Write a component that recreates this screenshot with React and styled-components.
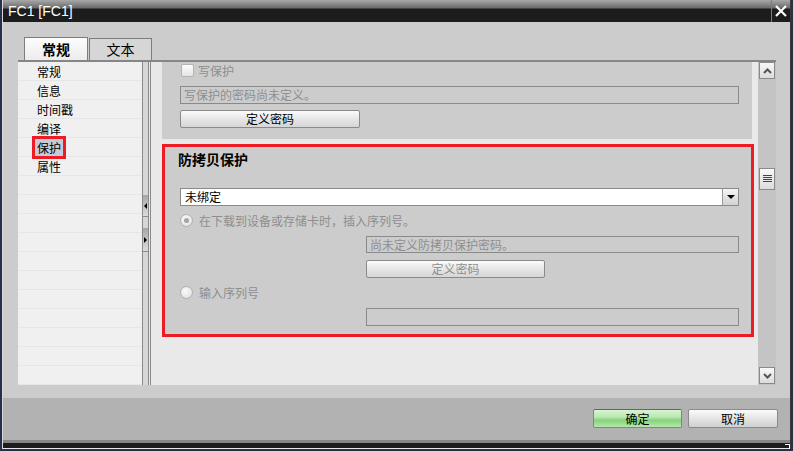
import React from 'react';
import styled, { createGlobalStyle } from 'styled-components';

const cjk = `"Noto Sans CJK SC", "Liberation Sans", sans-serif`;

const GlobalStyle = createGlobalStyle`
  html, body {
    margin: 0;
    padding: 0;
    background: #25314b;
  }
  * {
    box-sizing: border-box;
  }
`;

const Window = styled.div`
  width: 793px;
  height: 451px;
  background: #25314b;
  padding: 0 2px 2px 2px;
`;
const Shell = styled.div`
  height: 449px;
  display: flex;
  flex-direction: column;
  border-left: 1px solid #d8d8d8;
  border-right: 1px solid #3a3a3a;
`;
const TitleBar = styled.div`
  height: 22px;
  flex-shrink: 0;
  display: flex;
  justify-content: space-between;
  background: linear-gradient(to bottom, #a8a8a8 0px, #6a6a6a 8px, #1c1c1c 9px, #1c1c1c 100%);
`;
const Title = styled.div`
  padding-left: 5px;
  color: #fff;
  font: 14px/22px "Liberation Sans", sans-serif;
`;
const CloseButton = styled.div`
  width: 19px;
  height: 22px;
  border-left: 1px solid #7c7c7c;
  display: flex;
  align-items: center;
  justify-content: center;
`;
const Body = styled.div`
  height: 418px;
  flex-shrink: 0;
  display: flex;
  flex-direction: column;
  padding-top: 15px;
  background: #cccccc;
`;
const TabRow = styled.div`
  height: 23px;
  display: flex;
  gap: 1px;
  margin-left: 21px;
`;
const Tab = styled.div`
  width: ${(p) => (p.$active ? 64 : 63)}px;
  height: ${(p) => (p.$active ? 23 : 22)}px;
  margin-top: ${(p) => (p.$active ? 0 : 1)}px;
  border: 1px solid #7d7d7d;
  border-bottom: none;
  background: ${(p) => (p.$active ? 'linear-gradient(#fdfdfd, #ececec)' : '#d6d6d6')};
  font-family: ${cjk};
  font-size: 14px;
  font-weight: ${(p) => (p.$active ? 700 : 400)};
  line-height: ${(p) => (p.$active ? 22 : 21)}px;
  text-align: center;
  color: #000;
`;
const Frame = styled.div`
  height: 325px;
  flex-shrink: 0;
  display: flex;
  margin: 0 14px 0 15px;
  border-top: 2px solid #868686;
  background: #e9e9e9;
`;
const NavList = styled.div`
  width: 124px;
  flex-shrink: 0;
  display: flex;
  flex-direction: column;
  overflow: hidden;
  background: #f0f0f0;
`;
const NavItem = styled.div`
  height: 19px;
  flex-shrink: 0;
  display: flex;
  align-items: center;
  padding-left: 19px;
  border-bottom: 1px solid #e6e6e6;
  font: 12px/17px ${cjk};
  color: #000;
`;
const Highlight = styled.span`
  margin-left: -2px;
  padding: 0 2px;
  background: #c5ccd5;
  outline: 3px solid #ed1c24;
`;
const Splitter = styled.div`
  width: 7px;
  flex-shrink: 0;
  margin-right: 1px;
  padding-top: 133px;
  display: flex;
  flex-direction: column;
  border-left: 1px solid #8a8a8a;
  border-right: 1px solid #8a8a8a;
  background: #d6d6d6;
`;
const SplitButton = styled.div`
  height: ${(p) => p.$h}px;
  margin-top: ${(p) => p.$top || 0}px;
  display: flex;
  align-items: center;
  justify-content: center;
  border-bottom: 1px solid #8a8a8a;
  background: linear-gradient(#a6a6a6, #dcdcdc);
`;
const Arrow = styled.span`
  width: 0;
  height: 0;
  border-top: 3px solid transparent;
  border-bottom: 3px solid transparent;
  ${(p) => (p.$dir === 'left' ? 'border-right: 3px solid #000;' : 'border-left: 3px solid #000;')}
`;
const Pane = styled.div`
  flex: 1;
  display: flex;
  flex-direction: column;
  padding: 0 4px 0 11px;
  border-left: 1px solid #8a8a8a;
  background: #e9e9e9;
`;
const Section = styled.div`
  height: 77px;
  flex-shrink: 0;
  margin-right: 2px;
  padding: 1px 13px 0 18px;
  display: flex;
  flex-direction: column;
  background: #cccccc;
`;
const OutlinedSection = styled.div`
  height: 193px;
  flex-shrink: 0;
  margin-top: 5px;
  padding: 0 12px 0 15px;
  display: flex;
  flex-direction: column;
  border: 3px solid #ed1c24;
  background: #cccccc;
`;
const GroupTitle = styled.div`
  margin: 3px 0 0 -2px;
  font: 700 14px/18px ${cjk};
  color: #000;
`;
const CheckRow = styled.div`
  height: 15px;
  display: flex;
  align-items: center;
  gap: 4px;
  margin-left: 1px;
`;
const CheckBox = styled.span`
  width: 13px;
  height: 13px;
  border: 1px solid #b4b4b4;
  border-radius: 2px;
  background: linear-gradient(#fdfdfd, #e4e4e4);
`;
const RadioRow = styled.div`
  height: 14px;
  margin-top: 7px;
  display: flex;
  align-items: center;
  gap: 6px;
`;
const Radio = styled.span`
  width: 13px;
  height: 13px;
  border-radius: 50%;
  border: 1px solid #b0b0b0;
  background: radial-gradient(circle at 40% 35%, #fafafa, #dcdcdc);
  display: flex;
  align-items: center;
  justify-content: center;
  &::after {
    content: '';
    display: ${(p) => (p.$checked ? 'block' : 'none')};
    width: 5px;
    height: 5px;
    border-radius: 50%;
    background: #a4a4a4;
  }
`;
const Muted = styled.span`
  font: 12px/15px ${cjk};
  color: #8e8e8e;
`;
const Field = styled.div`
  height: ${(p) => p.$h || 18}px;
  margin-top: ${(p) => p.$top}px;
  margin-left: ${(p) => p.$indent || 0}px;
  padding-left: 3px;
  border: 1px solid #8a8a8a;
  background: #cccccc;
  font: 12px/${(p) => (p.$h || 18) - 2}px ${cjk};
  color: #8e8e8e;
  white-space: nowrap;
`;
const Button = styled.div`
  width: ${(p) => p.$w}px;
  height: 18px;
  margin-top: ${(p) => p.$top}px;
  margin-left: ${(p) => p.$indent || 0}px;
  border: 1px solid #8a8a8a;
  border-radius: 2px;
  background: linear-gradient(#fbfbfb, #e6e6e6 50%, #d6d6d6);
  font: 12px/16px ${cjk};
  text-align: center;
  color: ${(p) => (p.$disabled ? '#8e8e8e' : '#000')};
`;
const Select = styled.div`
  height: 18px;
  margin-top: 20px;
  display: flex;
  border: 1px solid #8a8a8a;
  background: #fff;
`;
const SelectValue = styled.div`
  flex: 1;
  padding-left: 4px;
  font: 12px/16px ${cjk};
  color: #000;
`;
const SelectButton = styled.div`
  width: 16px;
  display: flex;
  align-items: center;
  justify-content: center;
  border-left: 1px solid #9a9a9a;
  background: linear-gradient(#f6f6f6, #d2d2d2);
`;
const ScrollBar = styled.div`
  width: 18px;
  flex-shrink: 0;
  display: flex;
  flex-direction: column;
  padding: 0 1px;
  background: #c4c4c4;
`;
const ScrollButton = styled.div`
  height: ${(p) => p.$h || 17}px;
  margin-top: ${(p) => (p.$pushDown ? 'auto' : `${p.$top || 0}px`)};
  margin-bottom: ${(p) => (p.$pushDown ? 1 : 0)}px;
  display: flex;
  align-items: center;
  justify-content: center;
  border: 1px solid #8a8a8a;
  background: linear-gradient(#f8f8f8, #dcdcdc);
`;
const Gap = styled.div`
  height: 13px;
  flex-shrink: 0;
`;
const Footer = styled.div`
  height: 42px;
  flex-shrink: 0;
  display: flex;
  justify-content: flex-end;
  align-items: flex-start;
  gap: 6px;
  padding: 11px 12px 0 0;
  background: #b2b2b2;
`;
const FooterButton = styled.div`
  width: ${(p) => p.$w}px;
  height: 19px;
  border: 1px solid ${(p) => (p.$primary ? '#5f9f58' : '#8a8a8a')};
  border-top-color: ${(p) => (p.$primary ? '#2f8a2f' : '#8a8a8a')};
  border-radius: 2px;
  background: ${(p) =>
    p.$primary
      ? 'linear-gradient(#d8f4d1, #bce9b3 40%, #86d27b 60%, #b6e8ad)'
      : 'linear-gradient(#fbfbfb, #e4e4e4 50%, #d0d0d0)'};
  font: 12px/17px ${cjk};
  text-align: center;
  color: #000;
`;
const BottomEdge = styled.div`
  position: relative;
  height: 9px;
  flex-shrink: 0;
  border-top: 3px solid #868686;
  border-bottom: 1px solid #e8e8e8;
  background: #1c1c1c;
`;
const Grip = styled.span`
  position: absolute;
  right: 0;
  top: 1px;
  width: 5px;
  height: 5px;
  border-top: 1px solid #fff;
  border-right: 1px solid #fff;
`;

const navItems = ['常规', '信息', '时间戳', '编译', '保护', '属性'];

const Chevron = ({ up }) => (
  <svg width="9" height="6" viewBox="0 0 9 6">
    <polyline
      points={up ? '1,5 4.5,1.5 8,5' : '1,1 4.5,4.5 8,1'}
      fill="none"
      stroke="#555"
      strokeWidth="2"
    />
  </svg>
);

const Grabber = () => (
  <svg width="9" height="8" viewBox="0 0 9 8">
    {[0.5, 2.5, 4.5, 6.5].map((y) => (
      <line key={y} x1="0" y1={y} x2="9" y2={y} stroke="#444" strokeWidth="1" />
    ))}
  </svg>
);

export default function App() {
  const rows = Array.from({ length: 17 }, (_, i) => navItems[i] || '');
  return (
    <>
      <GlobalStyle />
      <Window>
        <Shell>
          <TitleBar>
            <Title>FC1 [FC1]</Title>
            <CloseButton>
              <svg width="12" height="12" viewBox="0 0 12 12">
                <line x1="1" y1="1" x2="11" y2="11" stroke="#fff" strokeWidth="2.2" />
                <line x1="11" y1="1" x2="1" y2="11" stroke="#fff" strokeWidth="2.2" />
              </svg>
            </CloseButton>
          </TitleBar>
          <Body>
            <TabRow>
              <Tab $active>常规</Tab>
              <Tab>文本</Tab>
            </TabRow>
            <Frame>
              <NavList>
                {rows.map((label, i) => (
                  <NavItem key={i}>
                    {label === '保护' ? <Highlight>{label}</Highlight> : label}
                  </NavItem>
                ))}
              </NavList>
              <Splitter>
                <SplitButton $h={22}>
                  <Arrow $dir="left" />
                </SplitButton>
                <SplitButton $h={24} $top={11}>
                  <Arrow $dir="right" />
                </SplitButton>
              </Splitter>
              <Pane>
                <Section>
                  <CheckRow>
                    <CheckBox />
                    <Muted>写保护</Muted>
                  </CheckRow>
                  <Field $top={8}>写保护的密码尚未定义。</Field>
                  <Button $w={180} $top={6}>定义密码</Button>
                </Section>
                <OutlinedSection>
                  <GroupTitle>防拷贝保护</GroupTitle>
                  <Select>
                    <SelectValue>未绑定</SelectValue>
                    <SelectButton>
                      <svg width="8" height="6" viewBox="0 0 8 6">
                        <polygon points="0,1 8,1 4,5" fill="#000" />
                      </svg>
                    </SelectButton>
                  </Select>
                  <RadioRow>
                    <Radio $checked />
                    <Muted>在下载到设备或存储卡时，插入序列号。</Muted>
                  </RadioRow>
                  <Field $top={9} $indent={186} $h={17}>尚未定义防拷贝保护密码。</Field>
                  <Button $w={179} $top={7} $indent={186} $disabled>定义密码</Button>
                  <RadioRow>
                    <Radio />
                    <Muted>输入序列号</Muted>
                  </RadioRow>
                  <Field $top={9} $indent={186} />
                </OutlinedSection>
              </Pane>
              <ScrollBar>
                <ScrollButton>
                  <Chevron up />
                </ScrollButton>
                <ScrollButton $h={22} $top={89}>
                  <Grabber />
                </ScrollButton>
                <ScrollButton $pushDown>
                  <Chevron />
                </ScrollButton>
              </ScrollBar>
            </Frame>
            <Gap />
            <Footer>
              <FooterButton $w={89} $primary>确定</FooterButton>
              <FooterButton $w={90}>取消</FooterButton>
            </Footer>
          </Body>
          <BottomEdge>
            <Grip />
          </BottomEdge>
        </Shell>
      </Window>
    </>
  );
}
